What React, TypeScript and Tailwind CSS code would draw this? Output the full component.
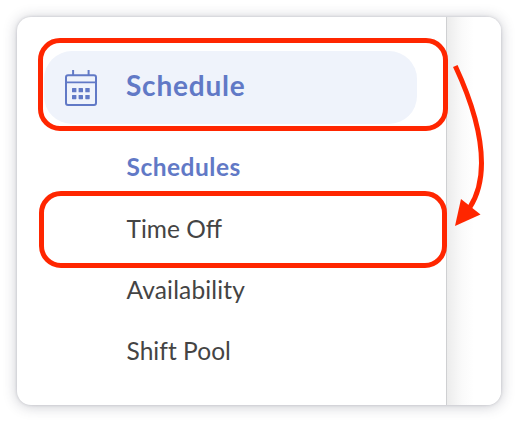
import React from "react";

const subItems = [
  { label: "Schedules", className: "font-bold text-[#6179c6] tracking-[0.5px]" },
  { label: "Time Off", className: "text-[#444444] tracking-[0px]" },
  { label: "Availability", className: "text-[#444444] tracking-[0.15px]" },
  { label: "Shift Pool", className: "text-[#444444] tracking-[0.05px]" },
];

const CalendarIcon = () => (
  <svg width="32" height="36" viewBox="0 0 32 36" fill="none" stroke="#6179c6">
    <rect x="1" y="5.2" width="30" height="29.8" rx="2" strokeWidth="2" />
    <path d="M1 12.4h30" strokeWidth="1.8" />
    <path d="M8.1 0v5M23.6 0v5" strokeWidth="2" />
    <g fill="#6179c6" stroke="none">
      <rect x="7" y="18" width="4.4" height="4.3" rx="0.6" />
      <rect x="13.6" y="18" width="4.4" height="4.3" rx="0.6" />
      <rect x="20.3" y="18" width="4.4" height="4.3" rx="0.6" />
      <rect x="7" y="24.9" width="4.4" height="4.3" rx="0.6" />
      <rect x="13.6" y="24.9" width="4.4" height="4.3" rx="0.6" />
      <rect x="20.3" y="24.9" width="4.4" height="4.3" rx="0.6" />
    </g>
  </svg>
);

const App = () => {
  return (
    <div className="relative h-[422px] w-[518px] overflow-hidden bg-white p-[17px] font-['Lato','Open_Sans',sans-serif]">
      {/* Card */}
      <div className="flex h-[388px] w-[484px] overflow-hidden rounded-[14px] bg-white shadow-[0_0_3px_rgba(50,55,75,0.2),0_1px_14px_rgba(50,55,75,0.28)]">
        {/* Sidebar */}
        <nav className="w-[429px] pt-[34px] pl-[27px]">
          <div className="flex h-[73px] w-[373px] items-center rounded-[28px] bg-[#eff3fb] pl-[21px]">
            <CalendarIcon />
            <span className="ml-[29px] pb-[5px] text-[28px] leading-[34px] font-bold tracking-[0.8px] text-[#6179c6]">
              Schedule
            </span>
          </div>
          <ul className="mt-[13px] pl-[82.5px] text-[24.5px]">
            {subItems.map((item) => (
              <li
                key={item.label}
                className="flex h-[61.3px] items-center whitespace-nowrap"
              >
                <span className={item.className}>{item.label}</span>
              </li>
            ))}
          </ul>
        </nav>
        {/* Page edge behind the sidebar */}
        <div className="flex-1 border-l border-[#cfd0d2] bg-linear-to-r from-[#ececec] from-0% via-[#fafafa] via-28% to-white to-50%" />
      </div>

      {/* Highlights */}
      <div className="absolute top-[38px] left-[38px] h-[93px] w-[410px] rounded-[22px] border-5 border-[#ff2600]" />
      <div className="absolute top-[191px] left-[39px] h-[77px] w-[408px] rounded-[22px] border-5 border-[#ff2600]" />
      <svg
        className="absolute top-0 left-0"
        width="518"
        height="422"
        viewBox="0 0 518 422"
        fill="none"
      >
        <path
          d="M455.3 66C473 104 481.5 135 481.5 163C481.5 181 478 195 469.5 208"
          stroke="#ff2600"
          strokeWidth="5"
        />
        <path d="M455 226L461 199L480.5 214.5Z" fill="#ff2600" />
      </svg>
    </div>
  );
};

export default App;
